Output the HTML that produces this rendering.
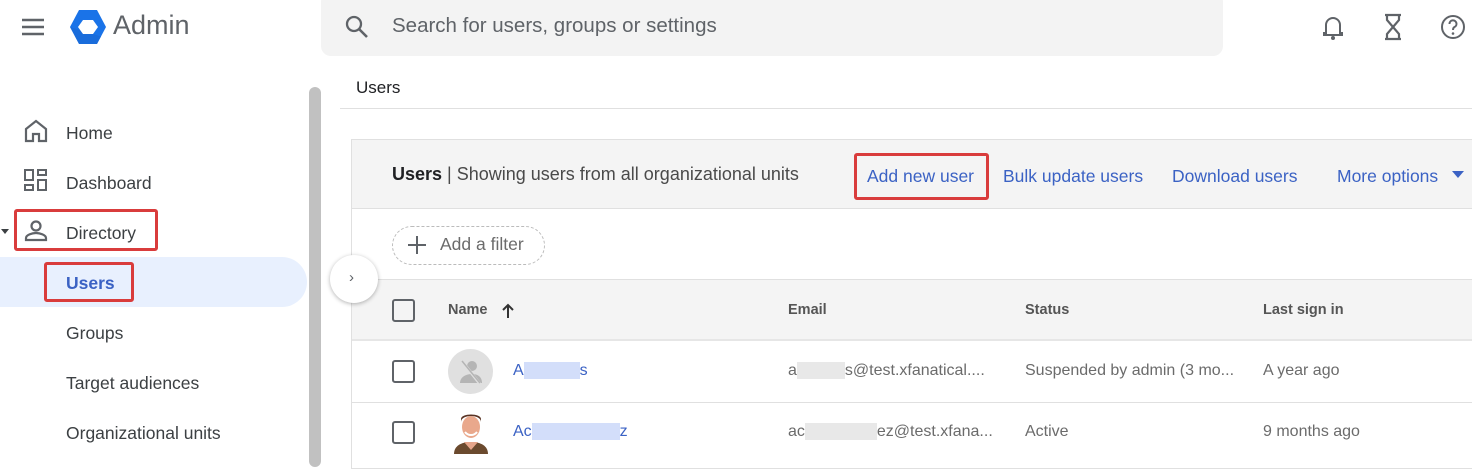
<!DOCTYPE html>
<html><head><meta charset="utf-8"><style>
*{margin:0;padding:0;box-sizing:border-box}
body{width:1472px;height:461px;overflow:hidden;background:#fff;font-family:"Liberation Sans",sans-serif;color:#3c4043;position:relative}
.a{position:absolute;white-space:nowrap}
.nav{font-size:17.5px;color:#3c4043}
.red{position:absolute;border:3px solid #d93c3c;border-radius:3px}
.blue{color:#3b62c4}
.cb{position:absolute;width:23px;height:23px;border:2px solid #5f6368;border-radius:3px}
.th{font-size:14.5px;font-weight:bold;color:#555}
.td{font-size:16px;color:#6b6b6b}
.ln{position:absolute;height:1px;background:#e0e0e0}
</style></head><body>
<svg class="a" style="left:21px;top:17px" width="24" height="20"><path d="M1 3h22M1 10h22M1 17h22" stroke="#5f6368" stroke-width="2.4"/></svg>
<svg class="a" style="left:69px;top:9px" width="38" height="36" viewBox="0 0 38 36"><path d="M10 1h18l9 17-9 17H10L1 18z" fill="#1a73e8"/><path d="M1 18l9 17h18l4-7.5z" fill="#1967d2" opacity=".6"/><path d="M14 11h10l5 7-5 7H14l-5-7z" fill="#fff"/></svg>
<div class="a" style="left:113px;top:10px;font-size:27px;color:#5f6368">Admin</div>
<div class="a" style="left:321px;top:-8px;width:902px;height:64px;background:#f3f3f3;border-radius:10px"></div>
<svg class="a" style="left:344px;top:14px" width="26" height="26"><circle cx="10" cy="10" r="7" fill="none" stroke="#5f6368" stroke-width="2.3"/><path d="M15 15l8 8" stroke="#5f6368" stroke-width="2.6"/></svg>
<div class="a" style="left:392px;top:14px;font-size:20.5px;color:#5f6368">Search for users, groups or settings</div>
<svg class="a" style="left:1320px;top:13px" width="26" height="28"><path d="M6 20V12a7 7 0 0 1 14 0v8h2v2H4v-2z" fill="none" stroke="#5f6368" stroke-width="2"/><circle cx="13" cy="25" r="2" fill="#5f6368"/></svg>
<svg class="a" style="left:1382px;top:13px" width="22" height="28"><path d="M3 2h16M3 26h16M5 2v5l6 7 6-7V2M5 26v-5l6-7 6 7v5" fill="none" stroke="#5f6368" stroke-width="2.2"/></svg>
<svg class="a" style="left:1440px;top:14px" width="26" height="26"><circle cx="13" cy="13" r="11" fill="none" stroke="#5f6368" stroke-width="2"/><path d="M9.5 10a3.5 3.5 0 1 1 5 3c-1.3.7-1.5 1.5-1.5 3" fill="none" stroke="#5f6368" stroke-width="2"/><circle cx="13" cy="19.5" r="1.3" fill="#5f6368"/></svg>
<div class="a" style="left:0;top:257px;width:307px;height:50px;background:#e8f0fe;border-radius:0 25px 25px 0"></div>
<svg class="a" style="left:24px;top:119px" width="24" height="24"><path d="M2 10L12 2l10 8v12h-7v-7H9v7H2z" fill="none" stroke="#5f6368" stroke-width="2.2"/></svg>
<div class="a nav" style="left:66px;top:123px">Home</div>
<svg class="a" style="left:24px;top:169px" width="24" height="24"><path d="M1 1h8v10H1zM14 1h8v5h-8zM1 16h8v5H1zM14 11h8v10h-8z" fill="none" stroke="#5f6368" stroke-width="2"/></svg>
<div class="a nav" style="left:66px;top:173px">Dashboard</div>
<svg class="a" style="left:0;top:228px" width="10" height="8"><path d="M1 1h8L5 6z" fill="#3c4043"/></svg>
<svg class="a" style="left:24px;top:219px" width="24" height="24"><circle cx="12" cy="7" r="4.5" fill="none" stroke="#5f6368" stroke-width="2.2"/><path d="M2 21v-2c0-3 6-5 10-5s10 2 10 5v2z" fill="none" stroke="#5f6368" stroke-width="2.2"/></svg>
<div class="a nav" style="left:66px;top:223px">Directory</div>
<div class="a nav" style="left:66px;top:273px;color:#3b62c4;font-weight:bold">Users</div>
<div class="a nav" style="left:66px;top:323px">Groups</div>
<div class="a nav" style="left:66px;top:373px">Target audiences</div>
<div class="a nav" style="left:66px;top:423px">Organizational units</div>
<div class="red" style="left:14px;top:209px;width:144px;height:42px"></div>
<div class="red" style="left:44px;top:262px;width:90px;height:40px"></div>
<div class="a" style="left:309px;top:87px;width:12px;height:380px;background:#c1c1c1;border-radius:6px"></div>
<div class="a" style="left:356px;top:78px;font-size:17px;color:#202124">Users</div>
<div class="ln" style="left:340px;top:108px;width:1132px"></div>
<div class="a" style="left:351px;top:139px;width:1130px;height:330px;border:1px solid #e0e0e0"></div>
<div class="a" style="left:352px;top:140px;width:1120px;height:69px;background:#f4f4f4;border-bottom:1px solid #e0e0e0"></div>
<div class="a" style="left:392px;top:164px;font-size:18px;color:#4a4a4a"><b style="color:#202124">Users</b> | Showing users from all organizational units</div>
<div class="a blue" style="left:867px;top:166px;font-size:17.5px">Add new user</div>
<div class="red" style="left:854px;top:153px;width:135px;height:47px"></div>
<div class="a blue" style="left:1003px;top:166px;font-size:17.5px">Bulk update users</div>
<div class="a blue" style="left:1172px;top:166px;font-size:17.5px">Download users</div>
<div class="a blue" style="left:1337px;top:166px;font-size:17.5px">More options</div>
<svg class="a" style="left:1451px;top:170px" width="14" height="10"><path d="M1 1h12L7 8z" fill="#3b62c4"/></svg>
<div class="a" style="left:392px;top:226px;width:153px;height:39px;border:1px dashed #bbb;border-radius:20px"></div>
<svg class="a" style="left:407px;top:235px" width="20" height="20"><path d="M10 1v18M1 10h18" stroke="#5f6368" stroke-width="2"/></svg>
<div class="a" style="left:440px;top:234px;font-size:17.5px;color:#6b6b6b">Add a filter</div>
<div class="a" style="left:352px;top:279px;width:1120px;height:62px;background:#f4f4f4;border-top:1px solid #e0e0e0;border-bottom:2px solid #e6e6e6"></div>
<div class="cb" style="left:392px;top:299px"></div>
<div class="a th" style="left:448px;top:302px">Name</div>
<svg class="a" style="left:501px;top:303px" width="14" height="16"><path d="M7 15V2M2 7l5-5 5 5" fill="none" stroke="#333" stroke-width="2"/></svg>
<div class="a th" style="left:788px;top:302px">Email</div>
<div class="a th" style="left:1025px;top:302px">Status</div>
<div class="a th" style="left:1263px;top:302px">Last sign in</div>
<div class="a" style="left:330px;top:255px;width:48px;height:48px;border-radius:50%;background:#fff;box-shadow:0 1px 4px rgba(0,0,0,.3)"></div>
<div class="a" style="left:349px;top:269px;font-size:15px;color:#5f6368">›</div>
<div class="cb" style="left:392px;top:360px"></div>
<div class="a" style="left:448px;top:349px;width:45px;height:45px;border-radius:50%;background:#e0e0e0"></div>
<svg class="a" style="left:448px;top:349px" width="45" height="45"><circle cx="24" cy="17" r="5" fill="#b5b5b5"/><path d="M12 34c0-6 6-9 12-9s10 3 10 9z" fill="#b5b5b5"/><path d="M13 11l19 24" stroke="#e0e0e0" stroke-width="3"/><path d="M14 12l18 22" stroke="#b5b5b5" stroke-width="1.5"/></svg>
<div class="a blue" style="left:513px;top:362px;font-size:16px">A<span style="background:#d3defa;color:transparent">xxxxxxx</span>s</div>
<div class="a td" style="left:788px;top:362px">a<span style="background:#e8e8e8;color:transparent">xxxxxx</span>s@test.xfanatical....</div>
<div class="a td" style="left:1025px;top:362px">Suspended by admin (3 mo...</div>
<div class="a td" style="left:1263px;top:362px">A year ago</div>
<div class="ln" style="left:352px;top:402px;width:1120px"></div>
<div class="cb" style="left:392px;top:421px"></div>
<svg class="a" style="left:450px;top:410px" width="42" height="44"><path d="M4 44c0-8 7-12 17-12s17 4 17 12z" fill="#6b4a2e"/><path d="M14 32l7 8 7-8z" fill="#e6a58a"/><ellipse cx="21" cy="17" rx="9" ry="11" fill="#e9a88c"/><path d="M11 12c0-8 20-8 20 0v-3c0-6-20-6-20 0z" fill="#5a3424"/><path d="M15 22c3 4 9 4 12 0" stroke="#fff" stroke-width="2" fill="none"/></svg>
<div class="a blue" style="left:513px;top:423px;font-size:16px">Ac<span style="background:#d3defa;color:transparent">xxxxxxxxxxx</span>z</div>
<div class="a td" style="left:788px;top:423px">ac<span style="background:#e8e8e8;color:transparent">xxxxxxxxx</span>ez@test.xfana...</div>
<div class="a td" style="left:1025px;top:423px">Active</div>
<div class="a td" style="left:1263px;top:423px">9 months ago</div>
</body></html>
